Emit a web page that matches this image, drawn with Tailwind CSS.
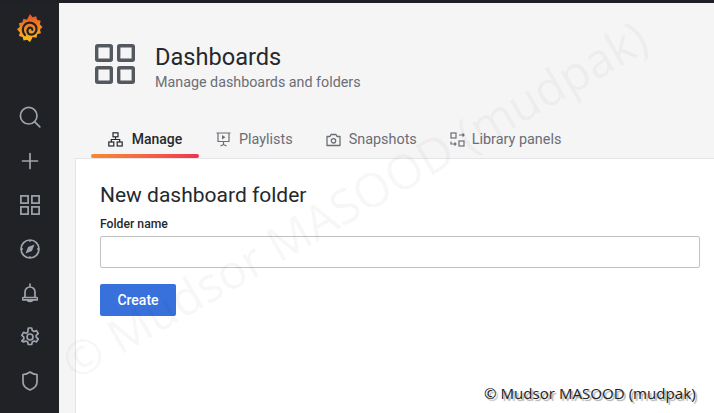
<!DOCTYPE html>
<html lang="en">
<head>
  <meta charset="UTF-8">
  <title>Dashboards</title>
  <script src="https://cdn.jsdelivr.net/npm/@tailwindcss/browser@4"></script>
</head>
<body class="h-[413px] w-[714px] overflow-hidden bg-[#f5f5f5] font-['Roboto',sans-serif]">
  <div class="relative flex h-full flex-col overflow-hidden">
    <div class="h-[3px] shrink-0 bg-[#1f2025]"></div>
    <div class="flex min-h-0 flex-1">
      <!-- sidebar -->
      <nav class="flex w-[59px] shrink-0 flex-col items-center bg-[#202226] text-[#9fa4ae]">
        <div class="flex h-[92px] w-full justify-center pt-[11px]">
          <svg width="26" height="28" viewBox="0 0 26 28">
            <defs>
              <linearGradient id="logo" x1="0" y1="1" x2="0" y2="0">
                <stop offset="0" stop-color="#fcc21b"/>
                <stop offset="1" stop-color="#e8502a"/>
              </linearGradient>
            </defs>
            <path fill="url(#logo)" d="M13 0l2.600 3.200 3.600-1 .9 3.600 3.600.9-.9 3.500 2.700 2.800-2.500 2.600.9 3.600-3.500.9-1 3.600-3.600-.7L13 28l-2.900-2.300-3.500.9-1-3.500-3.600-1.100.9-3.500L0 15.300l2.800-2.600-.9-3.500 3.600-1 .9-3.500 3.500 1z"/>
            <path fill="none" stroke="#202226" stroke-width="2.200" stroke-linecap="round" d="M8 21c-3-3-3-8 .5-11 4-3 10-1 11 4 .6 4-2.500 7-6 6.500-3-.5-4-4-2.200-6 1.500-1.500 4-.8 4 1.300"/>
          </svg>
        </div>
        <div class="flex h-[44px] w-full items-center justify-center">
          <svg width="22" height="22" viewBox="0 0 22 22" fill="none" stroke="currentColor" stroke-width="1.700">
            <circle cx="9.700" cy="9.700" r="8.300"/><path d="M15.800 15.800l5 5" stroke-linecap="round"/>
          </svg>
        </div>
        <div class="flex h-[44px] w-full items-center justify-center">
          <svg width="18" height="18" viewBox="0 0 18 18" fill="none" stroke="currentColor" stroke-width="1.700">
            <path d="M9 1.500v15M1.500 9h15" stroke-linecap="round"/>
          </svg>
        </div>
        <div class="flex h-[44px] w-full items-center justify-center">
          <svg width="20" height="20" viewBox="0 0 20 20" fill="none" stroke="currentColor" stroke-width="1.700">
            <rect x=".9" y=".9" width="7.200" height="7.200"/><rect x="11.900" y=".9" width="7.200" height="7.200"/><rect x=".9" y="11.900" width="7.200" height="7.200"/><rect x="11.900" y="11.900" width="7.200" height="7.200"/>
          </svg>
        </div>
        <div class="flex h-[44px] w-full items-center justify-center">
          <svg width="20" height="20" viewBox="0 0 20 20" fill="none" stroke="currentColor" stroke-width="1.700">
            <circle cx="10" cy="10" r="9"/>
            <path fill="currentColor" stroke="none" d="M14.500 5.500l-2.600 6.400-6.400 2.600 2.600-6.400z"/>
            <path d="M10 1v2M10 17v2M1 10h2M17 10h2" stroke-width="1.300"/>
          </svg>
        </div>
        <div class="flex h-[44px] w-full items-center justify-center">
          <svg width="16" height="20" viewBox="0 0 16 20" fill="none" stroke="currentColor" stroke-width="1.700">
            <path stroke-linejoin="round" stroke-linecap="round" d="M8 1v2M3 14.500V9a5 5 0 0 1 10 0v5.500M1.500 14.500a1 1 0 0 0 0 2.300h13a1 1 0 0 0 0-2.300zM5.500 17.500c1 1.300 4 1.300 5 0"/>
          </svg>
        </div>
        <div class="flex h-[44px] w-full items-center justify-center">
          <svg width="20" height="20" viewBox="0 0 20 20" fill="none" stroke="currentColor" stroke-width="1.700">
            <circle cx="10" cy="10" r="3"/>
            <path stroke-linejoin="round" d="M8.300 1h3.400l.6 2.600 1.700.9 2.500-.9 1.700 2.900-2 1.800v1.900l2 1.800-1.700 2.900-2.500-.9-1.700 1-.6 2.500H8.300l-.6-2.500-1.700-1-2.500.9L1.800 14l2-1.800v-2L1.800 8.400l1.700-3 2.500.9 1.700-.9z"/>
          </svg>
        </div>
        <div class="flex h-[44px] w-full items-center justify-center">
          <svg width="16" height="20" viewBox="0 0 16 20" fill="none" stroke="currentColor" stroke-width="1.700">
            <path stroke-linejoin="round" d="M1 3.500C4 3.500 6 2.500 8 1c2 1.500 4 2.500 7 2.500V11c0 4-3 6.500-7 8-4-1.500-7-4-7-8z"/>
          </svg>
        </div>
      </nav>

      <main class="flex min-w-0 flex-1 flex-col">
        <header class="flex items-start pl-[36px] pt-[40px]">
          <svg class="mt-[1px]" width="40" height="40" viewBox="0 0 40 40" fill="none" stroke="#54585f" stroke-width="3.400">
            <rect x="1.700" y="1.700" width="14.600" height="14.600" rx="1"/><rect x="23.700" y="1.700" width="14.600" height="14.600" rx="1"/><rect x="1.700" y="23.700" width="14.600" height="14.600" rx="1"/><rect x="23.700" y="23.700" width="14.600" height="14.600" rx="1"/>
          </svg>
          <div class="ml-[20px]">
            <h1 class="text-[23.6px] leading-[29px] text-[#24292e]">Dashboards</h1>
            <p class="mt-[1px] text-[14.3px] leading-[18px] text-[#6a6e76]">Manage dashboards and folders</p>
          </div>
        </header>

        <div class="mt-[33px] flex h-[34px] pl-[32px] text-[14.4px] text-[#6a6e76]">
          <div class="relative flex w-[108px] items-center justify-center gap-[9px] pb-[3px] text-[14px] font-medium text-[#24292e]">
            <svg width="15" height="15" viewBox="0 0 15 15" fill="none" stroke="currentColor" stroke-width="1.200"><rect x="5" y=".8" width="5" height="4"/><rect x=".8" y="10" width="5" height="4"/><rect x="9.200" y="10" width="5" height="4"/><path d="M7.500 5v2.500M3.300 10V7.500h8.400V10"/></svg>
            Manage
            <span class="absolute bottom-0 left-0 h-[4px] w-full rounded-sm bg-gradient-to-r from-[#f68a2f] to-[#f0304f]"></span>
          </div>
          <div class="ml-[17px] flex items-center gap-[8px] pb-[3px]">
            <svg width="15" height="15" viewBox="0 0 15 15" fill="none" stroke="currentColor" stroke-width="1.200"><path d="M.5 1h14M2 1v8.500h11V1M7.500 9.500V13M4.500 14l3-1.500 3 1.500"/><path fill="currentColor" stroke="none" d="M6 3l3.500 2.200L6 7.400z"/></svg>
            Playlists
          </div>
          <div class="ml-[33px] flex items-center gap-[8px] pb-[3px]">
            <svg width="15" height="14" viewBox="0 0 15 14" fill="none" stroke="currentColor" stroke-width="1.300"><path stroke-linejoin="round" d="M1 3.500h3l1-2h5l1 2h3v9H1z"/><circle cx="7.500" cy="7.800" r="2.200"/></svg>
            Snapshots
          </div>
          <div class="ml-[33px] flex items-center gap-[7px] pb-[3px]">
            <svg width="15" height="15" viewBox="0 0 15 15" fill="none" stroke="currentColor" stroke-width="1.200"><rect x="1" y="1" width="5" height="5"/><rect x="9" y="9" width="5" height="5"/><path d="M9 3h5M12.500 1.500L14 3l-1.500 1.500M1 9.500V12h5M4.500 10.500L6 12l-1.500 1.500"/></svg>
            Library panels
          </div>
        </div>

        <section class="ml-[16px] flex-1 border-l border-t border-[#e4e5e6] bg-white pl-[24px] pr-[14px] pt-[23px]">
          <h2 class="text-[21px] leading-[26px] text-[#24292e]">New dashboard folder</h2>
          <label class="mt-[8px] block text-[12.2px] font-medium leading-[16px] text-[#24292e]">Folder name</label>
          <input type="text" class="mt-[4px] block h-[32px] w-full rounded-[2px] border border-[#c0c1c2] bg-white">
          <button class="mt-[16px] h-[32px] w-[76px] rounded-[2px] bg-[#3871dc] text-[14px] font-medium text-white">Create</button>
        </section>
      </main>
    </div>

    <!-- watermark -->
    <div class="pointer-events-none absolute left-[354px] top-[199px] -translate-x-1/2 -translate-y-1/2 -rotate-30 whitespace-nowrap font-['Open_Sans',sans-serif] text-[47.5px] text-black/5">© Mudsor MASOOD (mudpak)</div>
    <div class="absolute left-[484px] top-[384px] whitespace-nowrap font-['Open_Sans',sans-serif] text-[15.1px] leading-[18px] text-[#222] [text-shadow:2px_2px_1px_#aaa]">© Mudsor MASOOD (mudpak)</div>
  </div>
</body>
</html>
